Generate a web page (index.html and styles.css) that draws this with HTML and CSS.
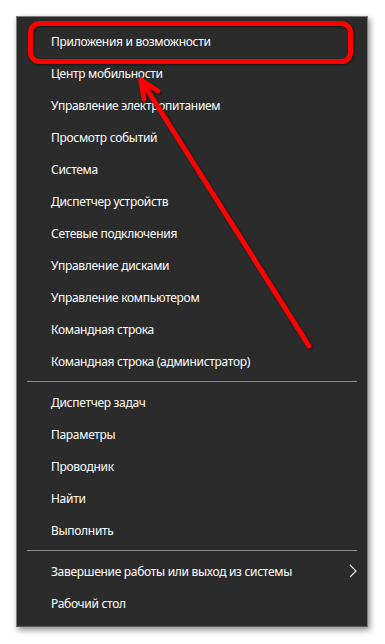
FILE: index.html
```html
<!DOCTYPE html>
<html>
  <head>
    <title>win+x menu</title>
    <link rel="stylesheet" href="styles.css">
  </head>
  <body>
    <div class="wrap">
      <div class="menu">
        <div class="item">Приложения и возможности</div>
        <div class="item">Центр мобильности</div>
        <div class="item">Управление электропитанием</div>
        <div class="item">Просмотр событий</div>
        <div class="item">Система</div>
        <div class="item">Диспетчер устройств</div>
        <div class="item">Сетевые подключения</div>
        <div class="item">Управление дисками</div>
        <div class="item">Управление компьютером</div>
        <div class="item">Командная строка</div>
        <div class="item">Командная строка (администратор)</div>
        <div class="sep"></div>
        <div class="item">Диспетчер задач</div>
        <div class="item">Параметры</div>
        <div class="item">Проводник</div>
        <div class="item">Найти</div>
        <div class="item">Выполнить</div>
        <div class="sep"></div>
        <div class="item sub">
          <span>Завершение работы или выход из системы</span>
          <svg class="chev" width="8" height="14" viewBox="0 0 8 14">
            <path d="M1 1 L7 7 L1 13" fill="none" stroke="#e8e8e8" stroke-width="1.2" />
          </svg>
        </div>
        <div class="item">Рабочий стол</div>
      </div>
    </div>
    <svg class="marks" width="385" height="644" viewBox="0 0 385 644">
      <g fill="none" stroke="#ff0000" stroke-width="5" stroke-linecap="round" stroke-linejoin="round">
        <rect x="30.5" y="23.5" width="320" height="38" rx="9" />
        <path d="M309 346 L141 80" />
        <path d="M158 91 L141 80 L144 99" />
      </g>
    </svg>
  </body>
</html>
```
FILE: styles.css
```css
body {
  margin: 0;
  background: #ffffff;
  font-family: "Noto Sans", "Open Sans", sans-serif;
}
.wrap {
  width: 385px;
  height: 644px;
  padding: 16px;
  box-sizing: border-box;
}
.menu {
  width: 352px;
  height: 611px;
  box-sizing: border-box;
  background: #2b2b2b;
  border: 1px solid #7c7c7c;
  border-bottom-color: #5a5a5a;
  box-shadow: 2px 3px 6px rgba(0, 0, 0, 0.45);
  padding: 8px 0 8px 0;
  display: flex;
  flex-direction: column;
}
.item {
  height: 32px;
  flex-shrink: 0;
  display: flex;
  align-items: center;
  padding-left: 34px;
  padding-right: 10px;
  color: #ffffff;
  font-size: 12px;
  letter-spacing: -0.3px;
}
.item.sub {
  justify-content: space-between;
}
.sep {
  height: 1px;
  flex-shrink: 0;
  margin: 4px 10px 4px 10px;
  background: #8a8a8a;
}
.marks {
  position: absolute;
  left: 0;
  top: 0;
  filter: drop-shadow(1px 1px 1px rgba(0, 0, 0, 0.5));
}
```
